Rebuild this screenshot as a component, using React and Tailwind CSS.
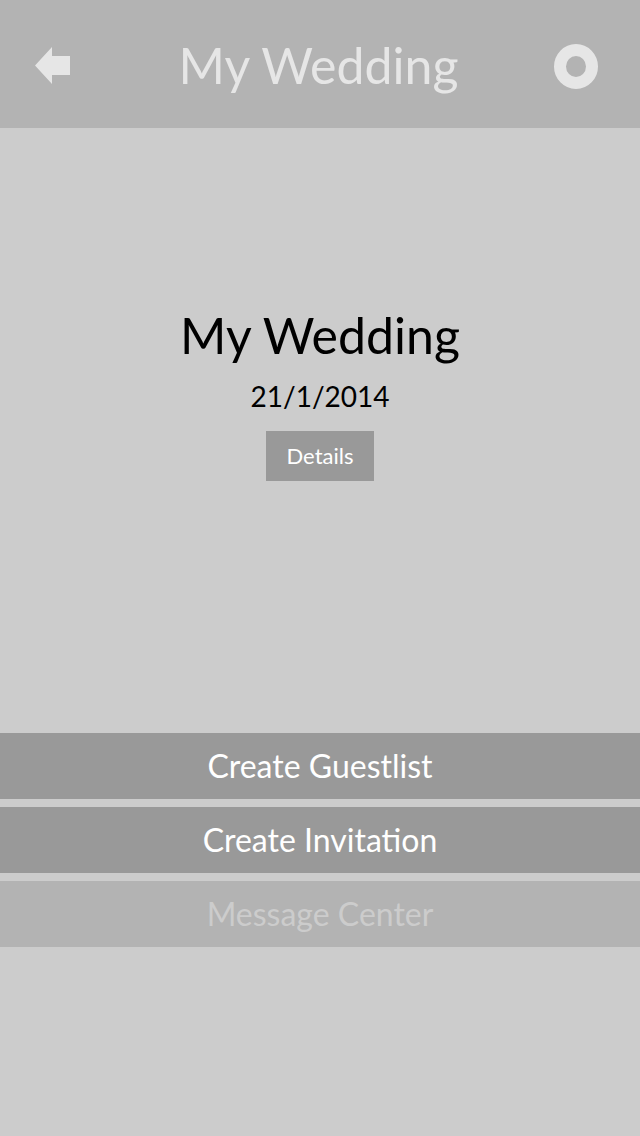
import React from 'react';

const font = { fontFamily: '"Lato", "Open Sans", sans-serif' };

const BackArrow = () => (
  <svg width="36" height="37" viewBox="0 0 36 37" className="block">
    <path d="M0 18.5 L17 0 L17 9 L35 9 L35 28 L17 28 L17 37 Z" fill="#e6e6e6" />
  </svg>
);

const RingIcon = () => (
  <svg width="44" height="45" viewBox="0 0 44 45" className="block">
    <ellipse cx="22" cy="22.5" rx="16" ry="16.5" fill="none" stroke="#e6e6e6" strokeWidth="12" />
  </svg>
);

const ActionButton = ({ label, disabled }) => (
  <button
    className={
      disabled
        ? 'w-full h-[66px] bg-[#b3b3b3] text-[#cccccc] text-[32px] leading-none flex items-center justify-center'
        : 'w-full h-[66px] bg-[#999999] text-white text-[32px] leading-none flex items-center justify-center'
    }
  >
    {label}
  </button>
);

const App = () => {
  return (
    <div className="w-[640px] h-[1136px] bg-[#cccccc] flex flex-col overflow-hidden" style={font}>
      {/* Header */}
      <div className="h-[128px] bg-[#b3b3b3] grid grid-cols-[1fr_auto_1fr] items-center px-[35px] pr-[42px]">
        <div className="justify-self-start pt-[2px]">
          <BackArrow />
        </div>
        <h1 className="text-[50px] leading-none text-[#e6e6e6] pt-[2px] pl-[4px]">My Wedding</h1>
        <div className="justify-self-end pt-[4px]">
          <RingIcon />
        </div>
      </div>

      {/* Wedding summary */}
      <div className="h-[605px] flex flex-col items-center pt-[182px]">
        <h2 className="text-[50px] leading-none text-black">My Wedding</h2>
        <p className="text-[28px] leading-none text-black mt-[22px]">21/1/2014</p>
        <button className="mt-[21px] w-[108px] h-[50px] bg-[#999999] text-white text-[22px] leading-none flex items-center justify-center">
          Details
        </button>
      </div>

      {/* Actions */}
      <div className="flex flex-col gap-[8px]">
        <ActionButton label="Create Guestlist" />
        <ActionButton label="Create Invitation" />
        <ActionButton label="Message Center" disabled />
      </div>
    </div>
  );
};

export default App;
